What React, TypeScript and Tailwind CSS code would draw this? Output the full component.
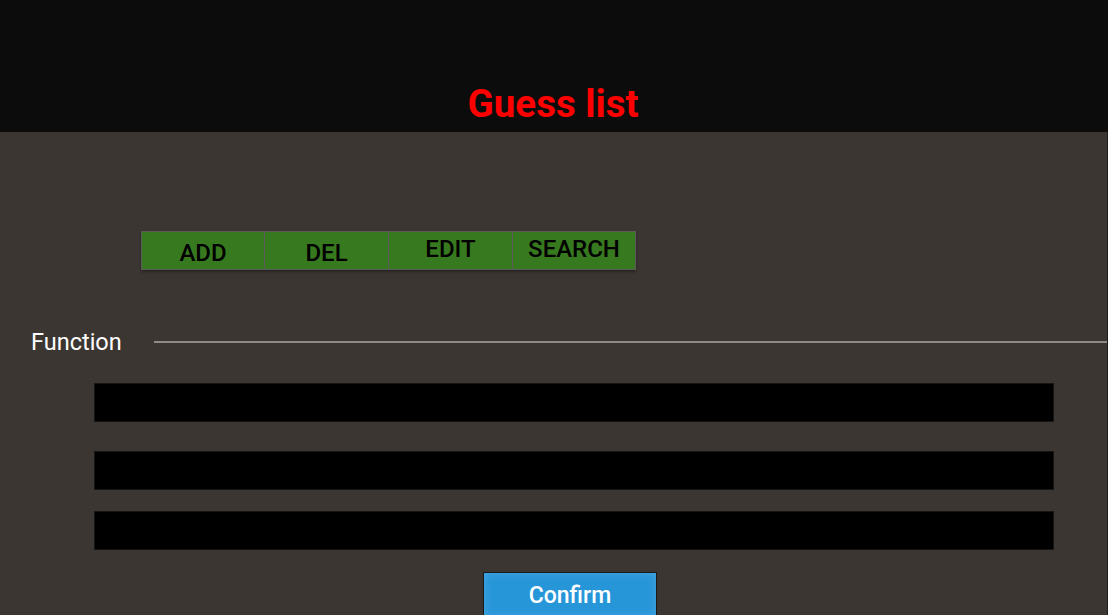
import React from "react";

const actions = [
  { label: "ADD", cls: "w-[123px] pt-[4px] border-r" },
  { label: "DEL", cls: "w-[124px] pt-[4px] border-r" },
  { label: "EDIT", cls: "w-[124px] pb-[4px] border-r" },
  { label: "SEARCH", cls: "w-[122px] pb-[4px]" },
];

const App = () => {
  return (
    <div className="min-h-screen w-full bg-[#3c3633] font-['Roboto',sans-serif]">
      {/* header */}
      <div className="h-[132px] bg-[#0c0c0c] flex items-end justify-center pb-[9px]">
        <h1 className="text-[38.5px] leading-[38px] font-bold text-[#ff0000] ml-[-2px]">Guess list</h1>
      </div>

      <div className="border-r border-[#1e1e1e] pb-10">
        {/* action buttons */}
        <div className="pt-[99px] pl-[141px]">
          <div className="flex w-[495px] h-[39px] border border-[#5a5a5a] shadow-[0_2px_3px_rgba(0,0,0,0.35)]">
            {actions.map((a) => (
              <div
                key={a.label}
                className={`shrink-0 flex items-center justify-center bg-[#37791e] border-[#5a5a5a] text-black text-[24px] leading-[28px] font-medium ${a.cls}`}
              >
                {a.label}
              </div>
            ))}
          </div>
        </div>

        {/* function divider */}
        <div className="mt-[60px] flex items-center">
          <span className="pl-[31px] text-white text-[23.5px] leading-[24px]">Function</span>
          <div className="ml-[32px] flex-1 h-[2px] bg-[#8f8a87]" />
        </div>

        {/* inputs */}
        <div className="ml-[94px] w-[960px] mt-[29px] flex flex-col">
          <div className="h-[39px] bg-black border border-[#161616]" />
          <div className="h-[39px] bg-black border border-[#161616] mt-[29px]" />
          <div className="h-[39px] bg-black border border-[#161616] mt-[21px]" />
        </div>

        <div className="mt-[22px] ml-[483px]">
          <button className="w-[174px] h-[46px] pt-[2px] bg-[#2796d9] border border-[#1a1a1a] text-white text-[23px] font-medium shadow-[inset_0_0_10px_rgba(255,255,255,0.15)]">
            Confirm
          </button>
        </div>
      </div>
    </div>
  );
};

export default App;
